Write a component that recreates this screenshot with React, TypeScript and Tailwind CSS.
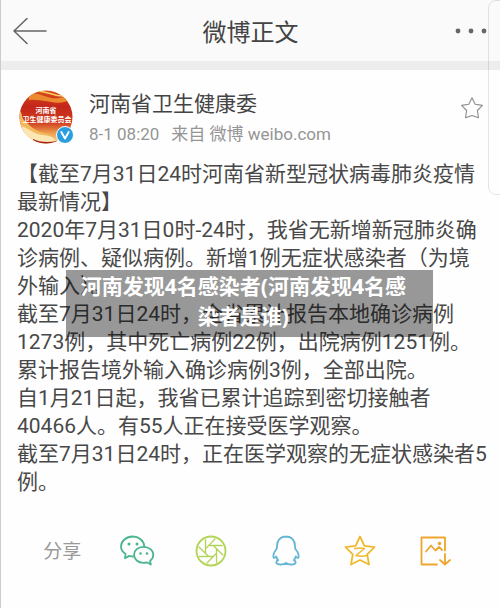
import type { ReactNode } from 'react'

const paragraphs = [
  '【截至7月31日24时河南省新型冠状病毒肺炎疫情最新情况】',
  '2020年7月31日0时-24时，我省无新增新冠肺炎确诊病例、疑似病例。新增1例无症状感染者（为境外输入）。',
  '截至7月31日24时，全省累计报告本地确诊病例1273例，其中死亡病例22例，出院病例1251例。',
  '累计报告境外输入确诊病例3例，全部出院。',
  '自1月21日起，我省已累计追踪到密切接触者40466人。有55人正在接受医学观察。',
  '截至7月31日24时，正在医学观察的无症状感染者5例。',
]

const Header = () => (
  <header className="grid grid-cols-[40px_1fr_40px] items-center h-[61px] px-3 bg-[#fafafa]">
    <button type="button" aria-label="返回">
      <svg viewBox="0 0 34 28" className="w-[34px] h-7" fill="none" stroke="#666" strokeWidth="1.6" strokeLinecap="round" strokeLinejoin="round">
        <path d="M33 14H1M14 1.5L1 14l13 12.5" />
      </svg>
    </button>
    <h1 className="text-center text-[24px] leading-8 pt-1 text-[#444]">微博正文</h1>
    <button type="button" aria-label="更多" className="flex justify-end">
      <svg viewBox="0 0 34 6" className="w-[34px] h-[6px]" fill="#666">
        <circle cx="4" cy="3" r="2.4" />
        <circle cx="17" cy="3" r="2.4" />
        <circle cx="30" cy="3" r="2.4" />
      </svg>
    </button>
  </header>
)

const Avatar = () => (
  <div className="relative w-[54px] h-[54px] shrink-0">
    <svg viewBox="0 0 54 54" className="w-[54px] h-[54px]">
      <defs>
        <clipPath id="round">
          <circle cx="27" cy="27" r="26.5" />
        </clipPath>
        <linearGradient id="red" x1="0" y1="0" x2="0" y2="1">
          <stop offset="0" stopColor="#d9501c" />
          <stop offset="0.3" stopColor="#c3261a" />
          <stop offset="0.6" stopColor="#cf3a1e" />
          <stop offset="0.8" stopColor="#eda04f" />
          <stop offset="1" stopColor="#f7dfa0" />
        </linearGradient>
      </defs>
      <g clipPath="url(#round)">
        <rect width="54" height="54" fill="url(#red)" />
        <path d="M10 4C22 1 30 12 44 7l6 3C40 17 24 8 10 10z" fill="#eb8a2e" />
        <path d="M16 1c12-1 18 6 30 5" stroke="#f8cf62" strokeWidth="1.6" fill="none" />
        <path d="M0 20c4 3 2 8 6 11s6 7 13 10 14 2 20 13H0z" fill="#f3b95c" />
        <path d="M2 36c8 2 12 8 22 9s12 3 14 9H10z" fill="#fbe6b4" />
        <path d="M14 49c6 3 14 4 24 2v3H14z" fill="#a8201c" />
      </g>
      <text x="27" y="23" textAnchor="middle" fontSize="7" fontWeight="700" fill="#fff">
        河南省
      </text>
      <text x="28" y="32" textAnchor="middle" fontSize="7" fontWeight="700" fill="#fff">
        卫生健康委员会
      </text>
    </svg>
    <svg viewBox="0 0 18 18" className="absolute -right-px bottom-0 w-[18px] h-[18px]">
      <circle cx="9" cy="9" r="8.5" fill="#2a9ddf" stroke="#fff" strokeWidth="1" />
      <path d="M5.3 6L9 12.4 12.7 6" fill="none" stroke="#fff" strokeWidth="1.9" strokeLinecap="round" strokeLinejoin="round" />
    </svg>
  </div>
)

const Author = () => (
  <div className="flex items-start pl-0.5 pr-1">
    <Avatar />
    <div className="flex-1 ml-4">
      <h2 className="text-[21px] leading-7 text-[#444]">河南省卫生健康委</h2>
      <p className="flex gap-3 text-[17px] leading-6 mt-1 text-[#959595] whitespace-nowrap">
        <time>8-1 08:20</time>
        <span>来自 微博 weibo.com</span>
      </p>
    </div>
    <button type="button" aria-label="收藏" className="mt-1.5">
      <svg viewBox="0 0 24 24" className="w-6 h-6" fill="none" stroke="#8c8c8c" strokeWidth="1.1" strokeLinejoin="round">
        <path d="M12 1.8l3.2 6.4 7.2 1.2-5 5.1 1.1 7.3L12 19.600l-6.500 2.200 1.100-7.300-5-5.100 7.200-1.200z" />
      </svg>
    </button>
  </div>
)

const ShareButton = ({ label, children }: { label: string; children: ReactNode }) => (
  <button type="button" aria-label={label} className="flex justify-center">
    <svg viewBox="0 0 36 34" className="w-9 h-[34px]" fill="none" strokeWidth="1.8" strokeLinecap="round" strokeLinejoin="round">
      {children}
    </svg>
  </button>
)

const ShareBar = () => (
  <footer className="grid grid-cols-6 items-center pl-6 pr-7 mt-[38px]">
    <span className="text-center text-[19px] leading-7 pt-0.5 text-[#999]">分享</span>
    <ShareButton label="微信">
      <g stroke="#4bb58d">
        <path d="M14 22.5c-1.3 0-2.5-.2-3.7-.6L6 24.3l.6-4.3C3.700 18.200 2 15.500 2 12.600 2 7.200 7.300 2.500 13.700 2.500c6 0 11.100 4 11.600 9.600" />
        <path d="M24.500 12.800c-5.500 0-9.500 3.500-9.500 8s4 8 9.500 8c1.200 0 2.300-.2 3.300-.5l4 2.200-.7-3.700c1.900-1.400 3.200-3.600 3.200-6 0-4.500-4.300-8-9.800-8z" />
      </g>
      <g fill="#4bb58d">
        <circle cx="10" cy="10" r="1.5" />
        <circle cx="18" cy="10" r="1.5" />
        <circle cx="21.5" cy="19.5" r="1.3" />
        <circle cx="28" cy="19.5" r="1.3" />
      </g>
    </ShareButton>
    <ShareButton label="朋友圈">
      <g stroke="#b2d557">
        <circle cx="18" cy="17" r="14.5" />
        <g strokeWidth="1.3">
          <path d="M15.700 11.500h13.500M20.300 11.500l9.500 9.500M23.500 14.700V28.500M23.500 19.300L14 29M20.300 22.500H6.500M15.700 22.500L6 13M12.500 19.300V5.700M12.500 14.700L22 5" />
        </g>
      </g>
    </ShareButton>
    <ShareButton label="QQ">
      <path stroke="#62b5d5" d="M18 2.500c-5.500 0-9 4-9 9.200 0 1.300 0 2.300-.4 3.300C6.500 17.500 5 20.500 5.400 23c.2 1.500 1.600.9 2.800-.5.3 1.500 1 2.700 2 3.700-1.700.7-2.300 2-1.500 3.200 1.300 1.700 6.800 1.400 9.300-.4 2.500 1.800 8 2.100 9.300.4.800-1.200.2-2.500-1.500-3.200 1-1 1.700-2.200 2-3.700 1.200 1.400 2.600 2 2.800.5.400-2.500-1.100-5.500-3.200-8-.4-1-.4-2-.4-3.300 0-5.200-3.500-9.200-9-9.200z" />
    </ShareButton>
    <ShareButton label="QQ空间">
      <g stroke="#f0b92c">
        <path d="M18 2.500l4.400 9.300 10.100 1.300-7.300 7.200 1.800 10.200L18 26l-9 4.500 1.800-10.200-7.300-7.200 10.100-1.300z" />
        <path strokeWidth="1.5" d="M12.500 14.500c3.500-.6 7-.6 10 0l-8.500 7c3.500.8 7.500.8 11 0" />
      </g>
    </ShareButton>
    <ShareButton label="保存图片">
      <g stroke="#efa62e">
        <path d="M20 30.500H4.500v-27h23.500v13" />
        <path d="M9 17.500l5-6 4.500 5 3.500-3.500 3 3M28 20v10M23 26l5 4.500 5-4.500" />
      </g>
      <circle cx="22.5" cy="9.5" r="1.8" fill="#efa62e" />
    </ShareButton>
  </footer>
)

const Caption = () => (
  <div className="absolute top-[270px] left-[13%] right-[67px] h-[67px] pt-px pl-2 pr-5 bg-black/40 text-center text-[21px] leading-[30px] font-bold text-white font-[family-name:'Noto_Sans','Noto_Sans_CJK_SC',sans-serif]">
    河南发现4名感染者(河南发现4名感染者是谁)
  </div>
)

export default function App() {
  return (
    <div
      lang="zh-CN"
      className="relative min-h-screen overflow-hidden bg-[#fefefe] border-l border-[#ccc] font-[family-name:Roboto,'Noto_Sans_CJK_SC',sans-serif]"
    >
      <Header />
      <div className="h-[9px] bg-[#ededed]" />
      <main>
        <article className="pt-5 pl-4 pr-3">
          <Author />
          <div className="mt-3.5 text-[21px] leading-7 text-[#484848]">
            {paragraphs.map((text) => (
              <p key={text}>{text}</p>
            ))}
          </div>
        </article>
        <ShareBar />
      </main>
      <div className="absolute top-0 -right-2 w-5 h-[195px] rounded-lg border border-black/10" />
      <Caption />
    </div>
  )
}
